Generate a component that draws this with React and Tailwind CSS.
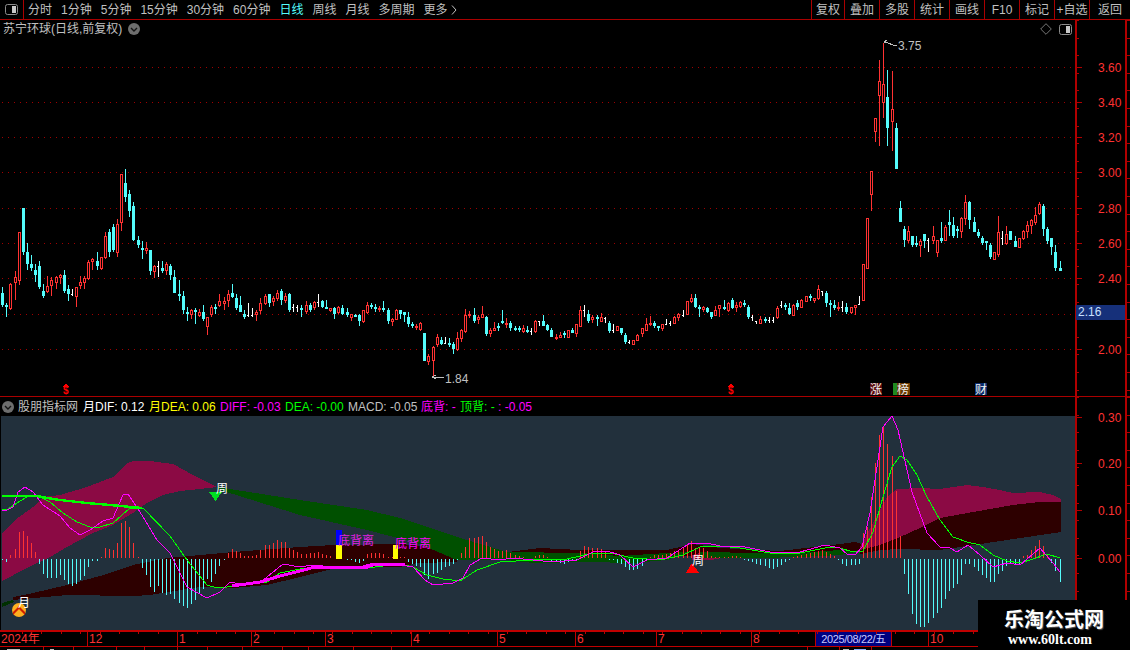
import React from 'react';

// candles in screen pixels: kind top bottom high low
const CANDLE_DATA = `c293 305 287 307,c305 307 303 317,r284 309 283 310,r277 283 271 300,r232 281 232 285,c208 252 208 255,c252 264 243 270,c264 268 255 271,c270 275 264 282,c266 287 261 289,c291 296 284 298,r286 292 276 293,r280 286 277 296,r277 283 276 289,r275 278 274 284,c275 291 270 293,c289 294 285 301,w294 294 289 296,r287 297 287 307,r282 286 276 289,r278 283 276 289,r262 279 260 280,r259 262 258 270,c261 266 252 270,r257 269 257 270,r236 258 232 259,c232 252 229 257,c227 250 224 252,r224 253 219 257,r174 223 174 231,c183 197 169 202,c194 211 190 217,c206 240 202 241,c240 245 236 248,c248 250 241 259,r248 251 242 254,c250 271 250 275,r266 272 265 278,w266 266 261 277,c268 271 261 273,r264 271 262 275,c266 275 264 280,c277 293 270 293,c294 296 280 301,c296 310 291 314,c312 314 307 321,r310 315 309 319,c310 312 308 324,r312 316 309 317,c312 319 305 321,r317 327 317 335,r307 315 305 317,c307 308 304 314,r301 306 294 307,r301 304 297 310,r294 301 290 307,
c293 297 284 298,c298 308 294 310,c305 312 296 312,c314 317 310 319,w315 315 303 317,w315 315 308 317,r312 315 310 321,r303 311 298 314,r296 304 294 305,c294 303 294 307,r298 302 296 306,r293 299 290 301,c291 300 289 305,r296 301 293 303,c294 310 293 312,w307 307 304 312,w307 307 305 312,c308 310 305 317,r305 312 301 314,c305 310 303 312,r302 308 301 310,w302 302 294 307,c301 307 300 308,c307 308 300 308,r308 311 308 312,c308 314 307 319,r307 313 306 314,c308 314 305 315,c312 315 308 317,r314 318 314 321,c315 316 314 317,c315 321 314 326,r310 322 310 323,r305 313 302 314,c305 307 303 309,c307 308 304 312,r308 310 306 312,c308 309 301 312,c310 321 308 324,r319 322 318 326,r310 320 309 320,c310 314 310 319,c312 315 312 322,c317 324 312 327,c324 326 322 328,r326 328 324 330,r323 330 322 331,c333 361 333 361,r356 362 354 365,r347 361 346 378,r337 345 334 347,c340 344 337 345,w343 343 337 344,c343 344 338 347,c344 349 342 354,r338 350 332 351,r330 339 329 342,r315 332 309 333,r314 315 311 318,c315 321 308 323,r317 320 315 324,r314 318 306 318,c317 334 316 336,r330 334 328 337,r328 331 322 331,c326 327 323 331,c321 323 310 324,r323 324 318 328,c323 328 321 331,c328 330 326 331,c328 329 326 332,r328 332 325 333,c330 331 326 333,w331 331 328 335,r321 332 320 333,w321 321 321 326,c321 326 315 326,c325 330 324 331,
c330 337 328 337,r337 338 334 340,r335 338 332 338,c333 335 331 338,r330 338 330 338,c330 333 328 333,r324 334 324 337,r310 327 306 327,w310 310 305 317,c314 321 310 323,r317 320 315 323,c317 318 315 326,r317 322 313 322,w318 318 317 323,c323 331 321 333,w330 330 324 333,r326 331 326 331,c328 333 328 335,c335 342 333 344,w342 342 340 344,r340 345 340 345,r335 341 334 341,r328 334 328 337,r324 331 318 331,r323 325 316 326,c323 326 321 328,c326 328 326 331,r324 329 324 331,w324 324 319 325,w323 323 321 326,r317 324 316 324,r314 318 313 321,w315 315 310 317,r301 315 301 315,r298 302 294 303,c298 307 294 308,c307 308 305 317,r307 310 306 312,c308 312 307 313,c312 317 312 319,r310 316 306 316,r305 309 305 317,c307 308 300 310,r303 311 302 312,c300 308 298 309,r305 308 302 312,r302 307 301 308,c303 305 300 307,c307 317 305 319,w317 317 315 321,w321 321 321 324,r319 324 316 324,c319 321 317 323,w320 320 317 323,w320 320 317 323,r308 318 306 319,w305 305 301 308,c305 307 303 310,c308 314 303 315,r305 316 304 316,c303 307 300 310,r300 308 299 308,r296 302 296 302,c296 298 294 301,r298 301 298 303,r289 299 285 300,w291 291 291 296,c293 303 291 307,c303 305 300 317,c305 308 300 310,r307 309 302 311,w307 307 301 312,c307 312 303 314,r307 313 307 314,r305 308 305 315,w304 304 296 305,
r264 301 264 301,r218 269 218 269,r171 195 171 211,r118 132 118 142,r81 96 60 146,r84 103 43 118,c97 128 70 146,r109 122 71 151,c128 169 123 169,c208 222 201 222,c229 240 226 247,r231 241 226 243,c236 245 236 247,c243 245 236 247,r241 246 239 257,c234 241 234 248,w240 240 238 252,r236 241 226 244,r240 253 240 257,c238 241 222 243,r227 241 225 241,c222 225 210 236,c225 236 217 238,c229 231 226 238,r218 232 217 238,r202 219 195 225,c202 220 201 229,c222 232 217 232,c232 236 229 238,c238 243 236 245,c241 243 241 250,c245 257 243 259,r252 260 252 260,r232 255 216 257,w238 238 231 245,r234 244 226 245,c231 240 231 240,c241 247 236 247,r238 248 238 248,r231 239 230 240,r225 232 221 238,r220 226 219 234,r215 223 207 225,r204 214 202 215,c206 229 204 236,c229 241 227 244,c238 247 238 255,c252 268 245 271,c268 271 261 271`;

const candles = CANDLE_DATA.split(',').map((item) => {
  const kind = item.trim()[0];
  const [top, bottom, high, low] = item.trim().slice(1).split(' ').map(Number);
  return { kind, top, bottom, high, low };
});

const HIST = [
  -1, -3, 3, 9, 26, 27, 22, 15, 6, -5, -15, -19, -19, -19, -16, -21, -25, -27, -25, -21, -17, -8, -2, -2, 1, 10, 9, 8, 15, 35, 37, 31, 15, 1, -9, -16, -28, -33, -27, -34, -36, -35, -40, -44, -47, -49, -45, -41, -35, -30, -20, -23, -15, -7, -1, 5, 9, 7, 5, 2, 2, 2, 3, 8, 13, 13, 15, 18, 16, 16, 10, 8, 6,
  4, 4, 5, 5, 6, 4, 3, 2, 0, 0, 0, -1, -1, -3, -4, -2, 4, 5, 5, 5, 4, 1, 1, 0, 1, 1, -3, -5, -7, -8, -16, -20, -15, -14, -11, -8, -7, -5, -1, 5, 11, 20, 20, 21, 22, 16, 11, 9, 7, 7, 8, 5, 3, 2, 1, 0, -1, 2, 3, 3, 1, -2, -3, -4, -5, -3, -2, -1, 7, 12, 11, 10, 10, 9, 7, -1, -1, -4, -5, -8, -11, -11, -10, -7, -2, 1, 3, 3, 3, 4, 5, 7, 8, 10, 13, 17, 10, 11, 10, 7, 2, 1, 1,
  1, 1, 2, 2, 1, -1, -2, -3, -5, -6, -7, -9, -10, -8, -6, -3, -1, 1, 2, 3, 4, 5, 6, 7, 8, 6, 4, 2, -1,
  -5, -7, -6, -6, -5, 25, 31, 61, 95, 123, 131, 114, 102, 67, 22, -15, -35, -55, -65, -68, -68, -64, -59, -54, -49, -40, -32, -29, -25, -16, -5, -5, -8, -12, -16, -19, -23, -23, -15, -12, -7, -5, -6, -5, 2, 3, 8, 12, 18, 12, 3, -4, -12, -23,
];

const barX = (i) => Math.round(2.3 + 4.098 * i);

const GRID_Y = [67, 102, 137, 172, 208, 243, 278, 314, 349];
const GRID_DOTS = Array.from({ length: 179 }, (_, i) => 2 + i * 6);
const PRICE_TICKS = [[3.6, 67], [3.4, 102], [3.2, 137], [3.0, 172], [2.8, 208], [2.6, 243], [2.4, 278], [2.0, 349]];
const MACD_TICKS = [[0.3, 417], [0.2, 463], [0.1, 510], [0.0, 558]];

const LEFT_TABS = ['分时', '1分钟', '5分钟', '15分钟', '30分钟', '60分钟', '日线', '周线', '月线', '多周期'];

const RIGHT_TABS = [
  { label: '复权', width: 'w-[33px]' },
  { label: '叠加', width: 'w-[35px]' },
  { label: '多股', width: 'w-[35px]' },
  { label: '统计', width: 'w-[35px]' },
  { label: '画线', width: 'w-[35px]' },
  { label: 'F10', width: 'w-[35px]' },
  { label: '标记', width: 'w-[35px]' },
  { label: '+自选', width: 'w-[35px]' },
  { label: '返回', width: 'w-[41px]' },
];

const LEGEND = [
  { text: '月DIF: 0.12', color: 'text-white', width: 'w-[66px]' },
  { text: '月DEA: 0.06', color: 'text-[#ffff00]', width: 'w-[71px]' },
  { text: 'DIFF: -0.03', color: 'text-[#ff00ff]', width: 'w-[65px]' },
  { text: 'DEA: -0.00', color: 'text-[#00ff00]', width: 'w-[63px]' },
  { text: 'MACD: -0.05', color: 'text-[#c0c0c0]', width: 'w-[73px]' },
  { text: '底背: -', color: 'text-[#ff00ff]', width: 'w-[39px]' },
  { text: '顶背: -', color: 'text-[#00ff00]', width: 'w-[38px]' },
  { text: ': -0.05', color: 'text-[#ff00ff]', width: 'w-[40px]' },
];

const TIME_SEGMENTS = [
  { label: '2024年', width: 'w-[87px]' },
  { label: '12', width: 'w-[90px]' },
  { label: '1', width: 'w-[74px]' },
  { label: '2', width: 'w-[74px]' },
  { label: '3', width: 'w-[86px]' },
  { label: '4', width: 'w-[86px]' },
  { label: '5', width: 'w-[78px]' },
  { label: '6', width: 'w-[81px]' },
  { label: '7', width: 'w-[95px]' },
  { label: '8', width: 'w-[64px]' },
];

// indicator shapes, screen pixels
const MAROON_LEFT = '2,534 15,520 33,507 43,497 60,495 87,487 113,477 127,463 133,461 150,461 173,464 193,475 217,487 200,489 180,491 163,495 147,503 133,513 113,525 93,533 67,547 50,557 27,568 2,581';
const MAROON_RIGHT = '860,547 873,523 887,497 897,489 920,488 940,489 967,485 983,487 1000,490 1013,493 1040,492 1053,495 1061,499 1061,502 1040,502 1013,505 973,512 940,518 920,528 900,537 880,545 860,550';
const MAROON_MID = '692,555 705,552 720,553 730,556 712,560 692,560';
const DARK_LEFT = '13,597 33,593 67,585 100,576 133,565 167,558 200,555 233,552 300,547 333,545 400,544 433,547 457,557 457,562 417,563 400,567 340,567 300,577 267,585 233,588 200,587 150,595 133,596 67,595 13,600';
const DARK_MID = '457,558 500,553 540,548 580,550 667,550 693,544 720,548 780,551 840,544 855,542 873,547 860,550 840,553 780,556 720,557 693,556 667,556 580,556 500,558';
const DARK_RIGHT = '860,550 880,545 900,537 920,528 940,518 973,512 1013,505 1040,502 1061,502 1061,532 1007,540 940,550 900,549 880,550 860,554';
const GREEN_BAND = '217,487 300,500 367,510 400,518 467,540 507,552 580,553 620,556 667,553 690,552 667,560 633,563 587,562 533,563 507,560 457,560 417,543 367,530 300,515 217,489';
const GREEN_SMALL = '2,603 13,600 14,602 2,607';
const GREEN_BAND_RIGHT = '700,552 760,553 800,553 840,550 860,551 840,555 800,557 760,558 700,558';

const LINE_GREEN = '2,509 8,509 17,503 27,497 38,496 50,502 63,513 77,522 90,527 100,527 113,523 130,508 143,508 170,536 187,560 207,585 217,588 227,587 253,583 267,582 280,573 300,569 320,567 347,567 367,568 400,564 413,567 427,575 443,579 460,581 477,570 500,562 533,560 567,559 593,553 610,553 633,558 660,560 683,555 700,547 720,546 740,548 770,553 800,553 830,547 840,548 853,552 863,551 873,532 883,497 892,467 900,456 907,460 917,475 927,497 940,520 953,537 967,542 980,545 993,555 1007,561 1020,563 1033,559 1047,554 1060,558';
const LINE_MAGENTA = '2,510 5,511 13,507 18,492 25,487 33,492 43,505 60,516 70,528 80,535 90,530 103,521 113,518 123,495 128,494 140,512 157,540 170,553 187,587 207,598 220,592 230,582 240,584 260,583 267,577 283,564 300,567 313,565 333,567 357,568 373,563 400,565 413,567 425,580 433,585 453,583 463,578 470,565 482,558 500,560 513,558 533,560 553,562 577,560 593,552 607,551 620,555 633,567 647,560 667,558 690,543 707,543 720,546 740,546 770,552 800,552 825,545 840,548 847,554 855,555 862,547 870,513 883,427 892,416 898,430 912,492 927,533 940,547 950,548 957,552 968,545 980,555 993,567 1007,563 1020,565 1040,548 1053,563 1060,572';
const THICK_GREEN = '2,496 37,496 47,498 60,500 87,503 110,505 142,508';
const THICK_MAGENTA = '232,586 260,582 280,576 300,571 315,567 340,567 365,568 375,564 405,565';

const AXIS_RED = '#b00000';
const TEXT_RED = '#ff3232';

function PanelIcon() {
  return (
    <svg width="13" height="11" viewBox="0 0 13 11">
      <rect x="0.5" y="0.5" width="12" height="10" rx="2" fill="#000" stroke="#8c8c8c" />
      <rect x="7" y="2" width="4" height="7" fill="#c8c8c8" />
    </svg>
  );
}

function ChevronBadge() {
  return (
    <svg width="12" height="12" viewBox="0 0 12 12">
      <circle cx="6" cy="6" r="6" fill="#6e6e6e" />
      <path d="M3 5 L6 8 L9 5" fill="none" stroke="#141414" strokeWidth="1.4" />
    </svg>
  );
}

function Toolbar() {
  return (
    <div className="flex h-[20px] shrink-0 items-center border-b border-[#aa0000] text-[12px] text-[#c0c0c0]">
      <div className="flex h-full w-[24px] shrink-0 items-center justify-center border-r border-[#aa0000]">
        <PanelIcon />
      </div>
      <div className="flex flex-1 items-center gap-[9px] pl-[4px]">
        {LEFT_TABS.map((tab) => (
          <span key={tab} className={tab === '日线' ? 'text-[#54fcfc]' : ''}>{tab}</span>
        ))}
        <span className="flex items-center gap-[3px]">
          更多
          <svg width="6" height="10" viewBox="0 0 6 10">
            <path d="M1 0.5 L5 5 L1 9.5" fill="none" stroke="#c0c0c0" />
          </svg>
        </span>
      </div>
      <div className="flex h-full">
        {RIGHT_TABS.map((tab) => (
          <div key={tab.label} className={`flex h-full items-center justify-center whitespace-nowrap border-l border-[#aa0000] ${tab.width}`}>
            {tab.label}
          </div>
        ))}
      </div>
    </div>
  );
}

function EventDollar({ x }) {
  return (
    <g>
      <polygon points={`${x + 3},383 ${x + 6},387 ${x},387`} fill="#ff0000" />
      <text x={x} y="394" fontSize="10" fontWeight="700" fill="#ff0000">$</text>
    </g>
  );
}

function PriceChart() {
  return (
    <svg className="block" width="1075" height="358" viewBox="0 38 1075 358" shapeRendering="crispEdges">
      {GRID_Y.map((y) => (
        <g key={y} fill="#a00000">
          {GRID_DOTS.map((x) => (
            <rect key={x} x={x} y={y} width="1" height="1" />
          ))}
        </g>
      ))}
      {candles.map((c, i) => {
        const x = barX(i);
        const color = c.kind === 'r' ? '#ff3232' : c.kind === 'c' ? '#54fcfc' : '#ffffff';
        if (c.kind === 'w') {
          return (
            <g key={i} fill={color}>
              <rect x={x} y={c.high} width="1" height={c.low - c.high} />
              <rect x={x - 1} y={c.top} width="2" height="1" />
            </g>
          );
        }
        if (c.kind === 'c') {
          return (
            <g key={i} fill={color}>
              <rect x={x} y={c.high} width="1" height={c.low - c.high} />
              <rect x={x - 1} y={c.top} width="3" height={Math.max(c.bottom - c.top, 2)} />
            </g>
          );
        }
        return (
          <g key={i}>
            <rect x={x} y={c.high} width="1" height={c.low - c.high} fill={color} />
            <rect x={x - 0.5} y={c.top + 0.5} width="2" height={Math.max(c.bottom - c.top - 1, 1)} fill="#000" stroke={color} />
          </g>
        );
      })}
      {/* high / low flags */}
      <path d="M884 42 L887 40 M884 42 L888 43 L893 45 L897 45" fill="none" stroke="#c0c0c0" />
      <text x="898" y="50" fontSize="12" fill="#c0c0c0">3.75</text>
      <path d="M432 377 L436 375 M432 377 L436 379 M432 377 L444 377" fill="none" stroke="#c0c0c0" />
      <text x="445" y="383" fontSize="12" fill="#c0c0c0">1.84</text>
      {/* event marks along the bottom */}
      <EventDollar x={63} />
      <EventDollar x={728} />
      <rect x="870" y="383" width="12" height="12" fill="#5a0a0a" />
      <text x="870" y="394" fontSize="12" fill="#f0f0f0">涨</text>
      <rect x="893" y="383" width="4" height="12" fill="#1f8a1f" />
      <rect x="897" y="383" width="13" height="12" fill="#6a3a00" />
      <text x="897" y="394" fontSize="12" fill="#f0f0f0">榜</text>
      <rect x="975" y="383" width="12" height="12" fill="#0a2a6a" />
      <text x="975" y="394" fontSize="12" fill="#f0f0f0">财</text>
    </svg>
  );
}

function ValueAxis({ viewBox, height, ticks, start, end, digits }) {
  const minor = [];
  for (let y = start; y < end; y += 17.6) minor.push(Math.round(y));
  return (
    <svg className="block shrink-0" width="55" height={height} viewBox={viewBox} shapeRendering="crispEdges">
      <rect x="1075" y={start} width="1.5" height={end - start} fill={AXIS_RED} />
      <rect x="1125" y={start} width="1.5" height={end - start} fill={AXIS_RED} />
      {minor.map((y) => (
        <g key={y}>
          <rect x="1076" y={y} width="3" height="1" fill={AXIS_RED} />
          <rect x="1126" y={y} width="4" height="1" fill={AXIS_RED} />
        </g>
      ))}
      {ticks.map(([value, y]) => (
        <g key={y}>
          <rect x="1076" y={y} width="6" height="1" fill={AXIS_RED} />
          <text x="1098" y={y + 5} fontSize="12" fill={TEXT_RED}>{value.toFixed(digits)}</text>
        </g>
      ))}
    </svg>
  );
}

function MacdChart() {
  return (
    <svg className="block" width="1075" height="214" viewBox="0 416 1075 214" shapeRendering="crispEdges">
      <rect x="0" y="416" width="1" height="214" fill="#000" />
      <polygon points={DARK_LEFT} fill="#2d0000" />
      <polygon points={DARK_MID} fill="#2d0000" />
      <polygon points={DARK_RIGHT} fill="#2d0000" />
      <polygon points={MAROON_LEFT} fill="#8b0a44" />
      <polygon points={MAROON_RIGHT} fill="#8b0a44" />
      <polygon points={MAROON_MID} fill="#8b0a44" />
      <polygon points={GREEN_BAND} fill="#005000" />
      <polygon points={GREEN_BAND_RIGHT} fill="#005000" />
      <polygon points={GREEN_SMALL} fill="#003000" />
      {HIST.map((h, i) =>
        h === 0 ? null : (
          <rect
            key={i}
            x={barX(i)}
            y={h > 0 ? 558 - h : 559}
            width="1"
            height={Math.abs(h)}
            fill={h > 0 ? '#ff3232' : '#54fcfc'}
          />
        )
      )}
      <rect x="336" y="530" width="6" height="15" fill="#0000ff" />
      <rect x="336" y="545" width="6" height="14" fill="#ffff00" />
      <rect x="393" y="545" width="5" height="14" fill="#ffff00" />
      <polyline points={LINE_GREEN} fill="none" stroke="#00ff00" />
      <polyline points={LINE_MAGENTA} fill="none" stroke="#ff00ff" />
      <polyline points={THICK_GREEN} fill="none" stroke="#00ff00" strokeWidth="2.4" />
      <polyline points={THICK_MAGENTA} fill="none" stroke="#ff00ff" strokeWidth="3" />
      <text x="338" y="545" fontSize="12" fill="#e020e0">底背离</text>
      <text x="395" y="548" fontSize="12" fill="#ff00ff">底背离</text>
      {/* signal markers */}
      <polygon points="209,492 222,492 215.5,501" fill="#00e020" />
      <polygon points="692,563 699,573 686,573" fill="#ff0000" />
      <text x="216" y="493" fontSize="12" fill="#ffffff">周</text>
      <text x="692" y="565" fontSize="12" fill="#ffffff">周</text>
      <g shapeRendering="auto">
        <circle cx="19" cy="610" r="7" fill="#ffb020" />
        <path d="M13 612 L19 606 L25 612 L25 615 L19 609 L13 615 Z" fill="#d02000" />
      </g>
      <text x="18" y="607" fontSize="12" fill="#ffffff">月</text>
    </svg>
  );
}

function TimeAxis() {
  const ticks = [];
  for (let x = 22; x < 980; x += 19.4) ticks.push(Math.round(x));
  return (
    <div className="relative flex h-[17px] shrink-0 border-y border-t-2 border-[#c00000] text-[12px] text-[#ff3232]">
      {TIME_SEGMENTS.map((seg, i) => (
        <div key={seg.label} className={`${seg.width} shrink-0 pl-[1px] leading-[15px] ${i > 0 ? 'border-l border-[#c00000]' : ''}`}>
          {seg.label}
        </div>
      ))}
      <div className="w-[77px] shrink-0 whitespace-nowrap border-x border-[#c00000] bg-[#000080] text-center text-[11px] leading-[14px] tracking-[-0.4px] text-[#c8c8ff]">
        2025/08/22/五
      </div>
      <div className="w-[36px] shrink-0" />
      <div className="flex-1 border-l border-[#c00000] pl-[1px] leading-[15px]">10</div>
      <svg className="absolute left-0 top-0" width="1130" height="3" shapeRendering="crispEdges">
        {ticks.map((x) => (
          <rect key={x} x={x} y="0" width="1" height="2" fill="#c00000" />
        ))}
      </svg>
    </div>
  );
}

function BottomStrip() {
  const marks = [43, 73, 116, 144, 177, 207, 242, 282, 308, 353, 391, 807, 839, 871];
  return (
    <svg className="block" width="1130" height="3" shapeRendering="crispEdges">
      {marks.map((x) => (
        <rect key={x} x={x} y="0" width="1" height="3" fill="#c00000" />
      ))}
      <rect x="7" y="2" width="13" height="1" fill="#c0c0c0" />
      <rect x="50" y="2" width="4" height="1" fill="#c0c0c0" />
      <rect x="843" y="2" width="6" height="1" fill="#c0c0c0" />
      <rect x="854" y="2" width="12" height="1" fill="#8fb0ff" />
    </svg>
  );
}

export default function App() {
  return (
    <div className="relative flex h-[650px] w-[1130px] flex-col overflow-hidden bg-black font-['Liberation_Sans','Noto_Sans_CJK_SC',sans-serif]">
      <Toolbar />

      {/* price panel */}
      <div className="flex h-[377px] shrink-0 border-b border-[#aa0000]">
        <div className="flex w-[1075px] shrink-0 flex-col">
          <div className="flex h-[18px] items-center pl-[3px] pr-[3px] text-[12px] text-[#c0c0c0]">
            <span>苏宁环球(日线,前复权)</span>
            <span className="ml-[6px] flex"><ChevronBadge /></span>
            <div className="ml-auto flex items-center gap-[7px]">
              <svg width="12" height="12" viewBox="0 0 12 12">
                <path d="M6 0.7 L11.3 6 L6 11.3 L0.7 6 Z" fill="none" stroke="#777" />
              </svg>
              <PanelIcon />
            </div>
          </div>
          <PriceChart />
        </div>
        <div className="relative">
          <ValueAxis viewBox="1075 20 55 376" height={376} ticks={PRICE_TICKS} start={20} end={396} digits={2} />
          <div className="absolute left-[1px] top-[285px] h-[15px] w-[49px] bg-[#16307a] pl-[2px] text-[12px] leading-[15px] text-[#c8e0ff]">2.16</div>
        </div>
      </div>

      {/* indicator panel */}
      <div className="flex h-[233px] shrink-0">
        <div className="flex w-[1075px] shrink-0 flex-col">
          <div className="flex h-[19px] items-center pl-[2px] text-[12px]">
            <ChevronBadge />
            <span className="ml-[4px] w-[65px] text-[#c0c0c0]">股朋指标网</span>
            {LEGEND.map((item) => (
              <span key={item.text} className={`${item.width} whitespace-nowrap ${item.color}`}>{item.text}</span>
            ))}
          </div>
          <div className="bg-[#22303c]">
            <MacdChart />
          </div>
        </div>
        <ValueAxis viewBox="1075 397 55 233" height={233} ticks={MACD_TICKS} start={397} end={630} digits={2} />
      </div>

      <TimeAxis />
      <BottomStrip />

      {/* watermark sits on top of the lower right corner */}
      <div className="absolute bottom-0 right-0 flex h-[50px] w-[152px] flex-col items-center bg-black pt-[7px] text-white">
        <span className="text-[20px] font-bold leading-[26px] [text-shadow:1px_1px_1px_#555]">乐淘公式网</span>
        <span className="mr-[8px] font-['Liberation_Serif',serif] text-[14px] font-bold leading-[14px]">www.60lt.com</span>
      </div>
    </div>
  );
}
